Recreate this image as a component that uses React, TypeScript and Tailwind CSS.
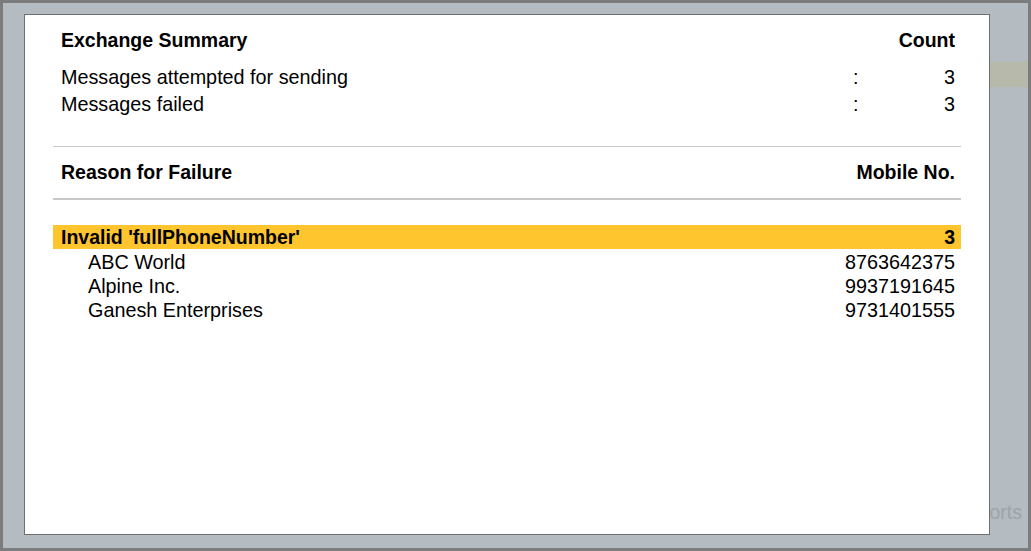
import React from "react";

interface Party {
  name: string;
  mobile: string;
}

interface FailureGroup {
  reason: string;
  count: number;
  parties: Party[];
}

const summary = [
  { label: "Messages attempted for sending", value: 3 },
  { label: "Messages failed", value: 3 },
];

const failures: FailureGroup[] = [
  {
    reason: "Invalid 'fullPhoneNumber'",
    count: 3,
    parties: [
      { name: "ABC World", mobile: "8763642375" },
      { name: "Alpine Inc.", mobile: "9937191645" },
      { name: "Ganesh Enterprises", mobile: "9731401555" },
    ],
  },
];

const App: React.FC = () => {
  return (
    <div
      className="relative w-[1031px] h-[551px] overflow-hidden border-[3px] border-[#7c7c7c] bg-[#b4bbc1] text-black"
      style={{ fontFamily: '"Liberation Sans", Arial, sans-serif' }}
    >
      {/* page behind the dialog */}
      <div className="absolute left-[960px] right-0 top-[59px] h-[25px] bg-[#b7b9ab]" />
      <div className="absolute right-[6px] top-[497px] text-[19.5px] leading-[24px] text-[#9ea4a9]">
        Reports
      </div>

      {/* dialog */}
      <div className="relative z-10 pl-[21px] pt-[11px]">
        <div className="w-[966px] h-[521px] bg-white border border-[#6e6e6e] px-[28px] pt-[13px] text-[19.8px] leading-[24px]">
          <div className="flex justify-between pl-[8px] pr-[6px] text-[19.5px] font-bold">
            <span>Exchange Summary</span>
            <span>Count</span>
          </div>

          <div className="mt-[13px] flex flex-col gap-[3px]">
            {summary.map(row => (
              <div key={row.label} className="flex pl-[8px] pr-[6px]">
                <span className="flex-1">{row.label}</span>
                <span className="w-[10px]">:</span>
                <span className="w-[92px] text-right">{row.value}</span>
              </div>
            ))}
          </div>

          <div className="mt-[30px] h-px bg-[#cacaca]" />

          <div className="mt-[13px] flex justify-between pl-[8px] pr-[6px] text-[19.5px] font-bold">
            <span>Reason for Failure</span>
            <span>Mobile No.</span>
          </div>

          <div className="mt-[14px] h-[2px] bg-[#c8c8c8]" />

          <div className="mt-[25px]">
            {failures.map(group => (
              <div key={group.reason}>
                <div className="flex justify-between bg-[#fec52f] pl-[8px] pr-[6px] text-[19.5px] font-bold">
                  <span>{group.reason}</span>
                  <span>{group.count}</span>
                </div>
                <div className="mt-px">
                  {group.parties.map(p => (
                    <div key={p.name} className="flex justify-between pl-[35px] pr-[6px]">
                      <span>{p.name}</span>
                      <span>{p.mobile}</span>
                    </div>
                  ))}
                </div>
              </div>
            ))}
          </div>
        </div>
      </div>
    </div>
  );
};

export default App;
